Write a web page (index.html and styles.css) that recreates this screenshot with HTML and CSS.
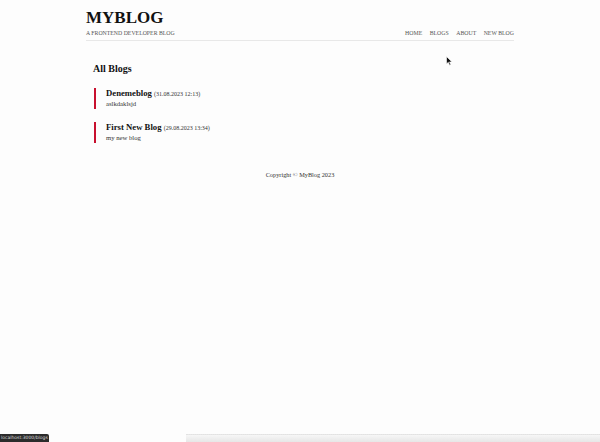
FILE: index.html
```html
<!DOCTYPE html>
<html>
<head>
<meta charset="utf-8">
<link rel="stylesheet" href="styles.css">
</head>
<body>
<div class="page">
  <header class="header">
    <div class="brand">
      <h1 class="logo">MYBLOG</h1>
      <div class="tagline">A FRONTEND DEVELOPER BLOG</div>
    </div>
    <nav class="nav">
      <a href="#">HOME</a>
      <a href="#">BLOGS</a>
      <a href="#">ABOUT</a>
      <a href="#">NEW BLOG</a>
    </nav>
  </header>
  <main class="content">
    <h2 class="section-title">All Blogs</h2>
    <div class="post">
      <div class="post-head"><span class="post-title">Denemeblog</span> <span class="post-date">(31.08.2023 12:13)</span></div>
      <div class="post-body">aslkdaklsjd</div>
    </div>
    <div class="post">
      <div class="post-head"><span class="post-title">First New Blog</span> <span class="post-date">(29.08.2023 13:34)</span></div>
      <div class="post-body">my new blog</div>
    </div>
  </main>
  <footer class="footer">Copyright © MyBlog 2023</footer>
</div>
<svg class="cursor" width="7" height="10" viewBox="0 0 7 10"><path d="M0.5 0.5 L0.5 8 L2.3 6.3 L3.6 9.3 L4.8 8.8 L3.5 5.9 L6 5.9 Z" fill="#111" stroke="#fff" stroke-width="0.6"/></svg>
<div class="status">localhost:3000/blogs</div>
<div class="scrollbar"></div>
</body>
</html>
```
FILE: styles.css
```css
html, body {
  margin: 0;
  padding: 0;
  background: #fdfdfd;
  height: 100%;
}
body {
  font-family: "Liberation Serif", "Times New Roman", serif;
  color: #222;
  position: relative;
  overflow: hidden;
}
.page {
  width: 428px;
  margin: 0 auto;
  padding-top: 8px;
}
.header {
  display: flex;
  justify-content: space-between;
  align-items: flex-end;
  border-bottom: 1px solid #e8e8e8;
  padding-bottom: 3px;
}
.logo {
  margin: 0;
  font-size: 17px;
  line-height: 20px;
  font-weight: bold;
  color: #111;
}
.tagline {
  font-size: 5.8px;
  line-height: 8px;
  color: #555;
  margin-top: 1px;
}
.nav {
  display: flex;
  gap: 7.5px;
  font-size: 5.8px;
  line-height: 8px;
}
.nav a {
  color: #555;
  text-decoration: none;
}
.content {
  padding: 21px 7px 0;
}
.section-title {
  margin: 0 0 12px;
  font-size: 10px;
  line-height: 14px;
  font-weight: bold;
  color: #111;
}
.post {
  border-left: 2px solid #c8102e;
  padding: 1px 0 1px 10px;
  margin: 0 0 13px 1px;
  font-size: 6.7px;
}
.post-head {
  font-size: 8.7px;
  line-height: 9px;
}
.post-title {
  font-weight: bold;
  color: #111;
}
.post-date {
  font-size: 6px;
  color: #333;
}
.post-body {
  font-size: 6.7px;
  line-height: 9px;
  color: #333;
}
.footer {
  text-align: center;
  font-size: 6.3px;
  line-height: 9px;
  color: #333;
  margin-top: 27px;
}
.cursor {
  position: absolute;
  left: 446px;
  top: 56px;
}
.status {
  position: absolute;
  left: 0;
  bottom: 0;
  background: #2b2b2b;
  color: #ddd;
  font-family: "DejaVu Sans", sans-serif;
  font-size: 4.5px;
  line-height: 8px;
  padding: 0 1px;
  border-top-right-radius: 2px;
}
.scrollbar {
  position: absolute;
  left: 186px;
  right: 0;
  bottom: 0;
  height: 7px;
  background: linear-gradient(#f7f7f7, #e6e6e6);
  border-top: 1px dotted #e2e2e2;
}
```
